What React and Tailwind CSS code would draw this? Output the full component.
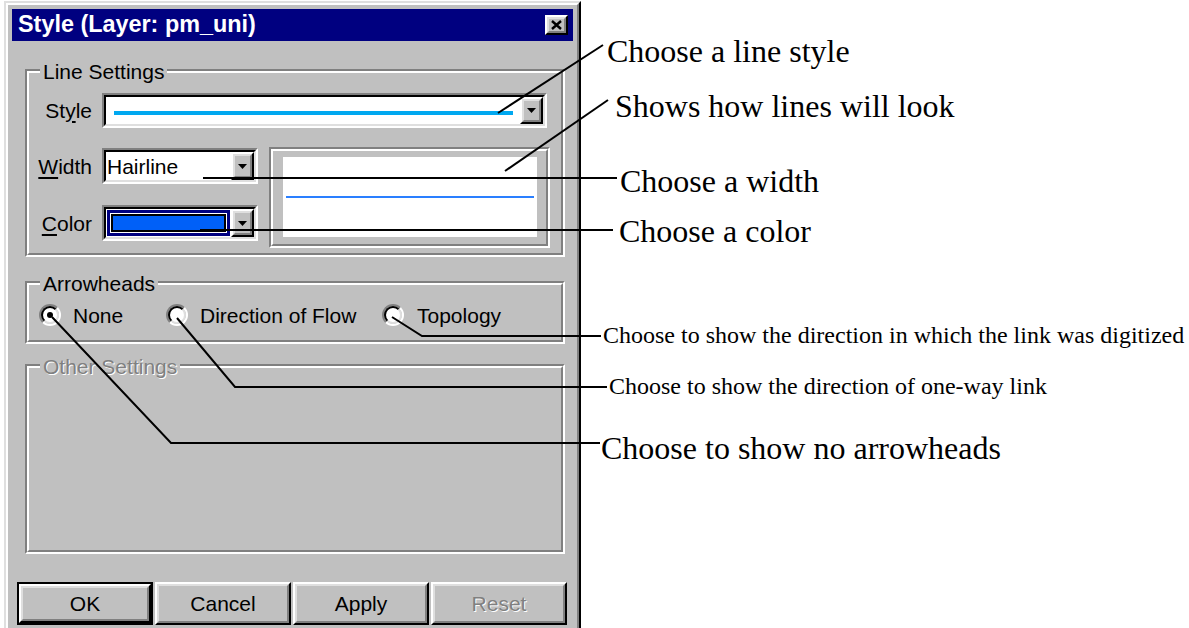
import React from 'react';

// Win95-style bevels built from two nested two-tone borders
function Raised({ className = '', innerClass = '', children }) {
  return (
    <div className={`border-2 border-t-white border-l-white border-b-black border-r-black ${className}`}>
      <div className={`h-full border-2 border-t-[#dfdfdf] border-l-[#dfdfdf] border-b-[#808080] border-r-[#808080] bg-[#c0c0c0] ${innerClass}`}>
        {children}
      </div>
    </div>
  );
}

function Field({ className = '', children }) {
  return (
    <div className={`border-2 border-t-[#808080] border-l-[#808080] border-b-white border-r-white ${className}`}>
      <div className="h-full flex border-2 border-t-black border-l-black border-b-[#dfdfdf] border-r-[#dfdfdf] bg-white">
        {children}
      </div>
    </div>
  );
}

function DropButton() {
  return (
    <Raised className="w-[23px] h-full shrink-0" innerClass="flex items-center justify-center">
      <svg width="9" height="5" viewBox="0 0 9 5">
        <path d="M0 0h9L4.5 5z" fill="#000" />
      </svg>
    </Raised>
  );
}

function Group({ label, disabled = false, className = '', children }) {
  return (
    <div className={`border-2 border-t-[#808080] border-l-[#808080] border-b-white border-r-white ${className}`}>
      <div className="h-full border-2 border-t-white border-l-white border-b-[#808080] border-r-[#808080]">
        <div
          className={`-mt-[13px] ml-[11px] w-fit px-[3px] h-[24px] leading-[24px] bg-[#c0c0c0] ${
            disabled ? 'text-[#808080] [text-shadow:1px_1px_0_#fff]' : 'text-black'
          }`}
        >
          {label}
        </div>
        {children}
      </div>
    </div>
  );
}

function Radio({ checked = false }) {
  return (
    <div className="w-[22px] h-[22px] shrink-0 rounded-full border-2 border-t-[#808080] border-l-[#808080] border-b-white border-r-white">
      <div className="w-full h-full rounded-full border-2 border-t-black border-l-black border-b-[#dfdfdf] border-r-[#dfdfdf] bg-white flex items-center justify-center">
        {checked && <div className="w-[6px] h-[6px] rounded-full bg-black" />}
      </div>
    </div>
  );
}

function Etched({ className = '', innerClass = '', children }) {
  return (
    <div className={`border-2 border-t-[#808080] border-l-[#808080] border-b-white border-r-white ${className}`}>
      <div className={`h-full border-2 border-t-white border-l-white border-b-[#808080] border-r-[#808080] ${innerClass}`}>
        {children}
      </div>
    </div>
  );
}

function StyleDialog() {
  return (
    <div className="ml-[4px] mt-[1px] w-[577px] h-[660px] border-2 border-t-[#dfdfdf] border-l-[#dfdfdf] border-b-black border-r-black">
      <div className="h-full border-2 border-t-white border-l-white border-b-[#808080] border-r-[#808080] bg-[#c0c0c0] px-[4px] pt-[4px] text-[21px] text-black">
        {/* caption */}
        <div className="h-[32px] bg-[#000080] flex items-center justify-between pl-[6px] pr-[5px]">
          <span className="text-white font-bold text-[23.4px] leading-none">Style (Layer: pm_uni)</span>
          <Raised className="w-[23px] h-[20px]" innerClass="flex items-center justify-center">
            <svg width="11" height="10" viewBox="0 0 11 10">
              <path d="M1 1l9 8M10 1l-9 8" stroke="#000" strokeWidth="2.4" />
            </svg>
          </Raised>
        </div>

        <Group label="Line Settings" className="mt-[28px] ml-[13px] w-[540px]">
          <div className="mt-[9px] flex items-center h-[35px]">
            <span className="w-[63px] text-right leading-none">
              St<span className="underline underline-offset-[3px]">y</span>le
            </span>
            <Field className="ml-[10px] w-[445px] h-[35px]">
              <div className="flex-1 flex items-center pl-[8px] pr-[7px] pt-[4px]">
                <div className="w-full h-[4px] bg-[#00a8f0]" />
              </div>
              <DropButton />
            </Field>
          </div>

          <div className="mt-[19px] flex pb-[5px]">
            <div className="w-[229px]">
              <div className="mt-[1px] flex items-center h-[36px]">
                <span className="w-[63px] text-right leading-none">
                  <span className="underline underline-offset-[3px]">W</span>idth
                </span>
                <Field className="ml-[10px] w-[156px] h-[36px]">
                  <div className="flex-1 flex items-center pl-[1px] leading-none">Hairline</div>
                  <DropButton />
                </Field>
              </div>
              <div className="mt-[21px] flex items-center h-[36px]">
                <span className="w-[63px] text-right leading-none">
                  <span className="underline underline-offset-[3px]">C</span>olor
                </span>
                <Field className="ml-[10px] w-[156px] h-[36px]">
                  <div className="flex-1 p-[1px]">
                    <div className="h-full bg-[#000080] p-[3px]">
                      <div className="h-full bg-white p-[1px]">
                        <div className="h-full border-2 border-black bg-[#0060f8]" />
                      </div>
                    </div>
                  </div>
                  <DropButton />
                </Field>
              </div>
            </div>

            {/* preview of the current line */}
            <Etched className="ml-[11px] w-[281px] h-[101px]" innerClass="pt-[6px] pb-[7px] pl-[10px] pr-[9px]">
              <div className="h-full bg-white flex items-center px-[3px]">
                <div className="w-full h-[2px] bg-[#2a7fff]" />
              </div>
            </Etched>
          </div>
        </Group>

        <Group label="Arrowheads" className="mt-[24px] ml-[13px] w-[540px]">
          <div className="mt-[6px] h-[26px] flex items-center pl-[10px] leading-none">
            <label className="w-[127px] flex items-center gap-[12px]">
              <Radio checked />
              <span>None</span>
            </label>
            <label className="w-[216px] flex items-center gap-[12px]">
              <Radio />
              <span>Direction of Flow</span>
            </label>
            <label className="flex items-center gap-[13px]">
              <Radio />
              <span>Topology</span>
            </label>
          </div>
          <div className="h-[12px]" />
        </Group>

        <Group label="Other Settings" disabled className="mt-[20px] ml-[13px] w-[540px] h-[190px]" />

        <div className="mt-[28px] ml-[5px] flex gap-[2px] leading-none">
          <div className="w-[136px] h-[43px] border-2 border-black">
            <Raised className="h-full" innerClass="flex items-center justify-center">OK</Raised>
          </div>
          <Raised className="w-[136px] h-[43px]" innerClass="flex items-center justify-center">Cancel</Raised>
          <Raised className="w-[136px] h-[43px]" innerClass="flex items-center justify-center">Apply</Raised>
          <Raised className="w-[136px] h-[43px]" innerClass="flex items-center justify-center text-[#808080] [text-shadow:1px_1px_0_#fff]">
            Reset
          </Raised>
        </div>
      </div>
    </div>
  );
}

function Callouts() {
  return (
    <>
      <svg className="absolute left-0 top-0 pointer-events-none" width="1189" height="628">
        <g stroke="#000" strokeWidth="2" fill="none">
          <line x1="498" y1="113" x2="603" y2="45" />
          <line x1="505" y1="171" x2="608" y2="100" />
          <line x1="203" y1="178" x2="617" y2="178" />
          <line x1="200" y1="230" x2="613" y2="230" />
          <polyline points="392,317 422,336 601,336" />
          <polyline points="177,318 235,387 607,387" />
          <polyline points="52,317 171,443 600,443" />
        </g>
      </svg>
      <div className="font-['Liberation_Serif','Times_New_Roman',serif] text-black whitespace-nowrap">
        <span className="absolute left-[607px] top-[35px] text-[32px] leading-[32px]">Choose a line style</span>
        <span className="absolute left-[615px] top-[90px] text-[32px] leading-[32px]">Shows how lines will look</span>
        <span className="absolute left-[620px] top-[165px] text-[32px] leading-[32px]">Choose a width</span>
        <span className="absolute left-[619px] top-[215px] text-[32px] leading-[32px]">Choose a color</span>
        <span className="absolute left-[603px] top-[323px] text-[24px] leading-[24px]">
          Choose to show the direction in which the link was digitized
        </span>
        <span className="absolute left-[609px] top-[374px] text-[24px] leading-[24px]">
          Choose to show the direction of one-way link
        </span>
        <span className="absolute left-[601px] top-[432px] text-[32px] leading-[32px]">Choose to show no arrowheads</span>
      </div>
    </>
  );
}

export default function App() {
  return (
    <div className="relative w-[1189px] h-[628px] overflow-hidden bg-white font-['Liberation_Sans',Arial,sans-serif]">
      <StyleDialog />
      <Callouts />
    </div>
  );
}
